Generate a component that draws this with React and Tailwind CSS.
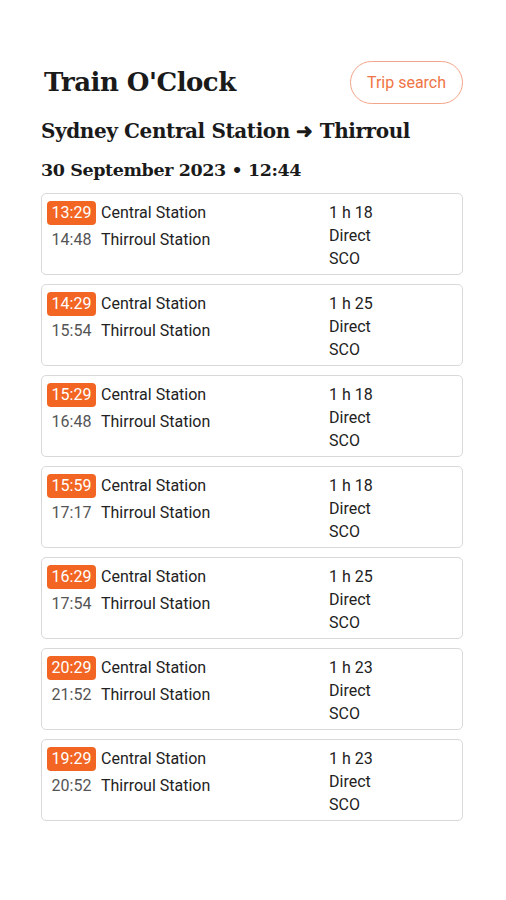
import React from "react";

const trips = [
  ["13:29", "14:48", "1 h 18"],
  ["14:29", "15:54", "1 h 25"],
  ["15:29", "16:48", "1 h 18"],
  ["15:59", "17:17", "1 h 18"],
  ["16:29", "17:54", "1 h 25"],
  ["20:29", "21:52", "1 h 23"],
  ["19:29", "20:52", "1 h 23"],
];

const serif = { fontFamily: '"DejaVu Serif", serif' };

export default function App() {
  return (
    <div className="w-[506px] h-[900px] bg-white" style={{ fontFamily: 'Roboto, "Noto Sans", sans-serif' }}>
      <div className="pl-[41px] pr-[43px] pt-[61px]">
        <div className="flex items-center justify-between h-[43px]">
          <div className="pl-[3px] text-[26px] font-bold text-[#1a1a1a] tracking-[-0.5px]" style={serif}>
            Train O'Clock
          </div>
          <div className="w-[113px] h-[43px] rounded-full border border-[#f3a589] flex items-center justify-center text-[16px] text-[#ef7445]">
            Trip search
          </div>
        </div>
        <div className="mt-[12px] text-[20px] leading-[30px] font-bold text-[#1a1a1a] tracking-[-0.4px]" style={serif}>
          Sydney Central Station ➜ Thirroul
        </div>
        <div className="mt-[11px] text-[17.5px] leading-[26px] font-bold text-[#1a1a1a] tracking-[-0.4px]" style={serif}>
          30 September 2023 • 12:44
        </div>
        <div className="mt-[10px] flex flex-col gap-[9px]">
          {trips.map(([dep, arr, dur], i) => (
            <div key={i} className="h-[82px] border border-[#d9d9d9] rounded-[5px] flex pl-[5px] pt-[7px] text-[16px]">
              <div className="w-[282px] flex flex-col">
                <div className="flex items-center h-[24px]">
                  <div className="w-[49px] h-[24px] bg-[#f26522] rounded-[4px] text-white flex items-center justify-center">
                    {dep}
                  </div>
                  <div className="ml-[5px] text-[#222]">Central Station</div>
                </div>
                <div className="flex items-center h-[23px] mt-[3px]">
                  <div className="w-[49px] text-center text-[#555]">{arr}</div>
                  <div className="ml-[5px] text-[#222]">Thirroul Station</div>
                </div>
              </div>
              <div className="flex flex-col leading-[23px] text-[#222]">
                <div>{dur}</div>
                <div>Direct</div>
                <div>SCO</div>
              </div>
            </div>
          ))}
        </div>
      </div>
    </div>
  );
}
